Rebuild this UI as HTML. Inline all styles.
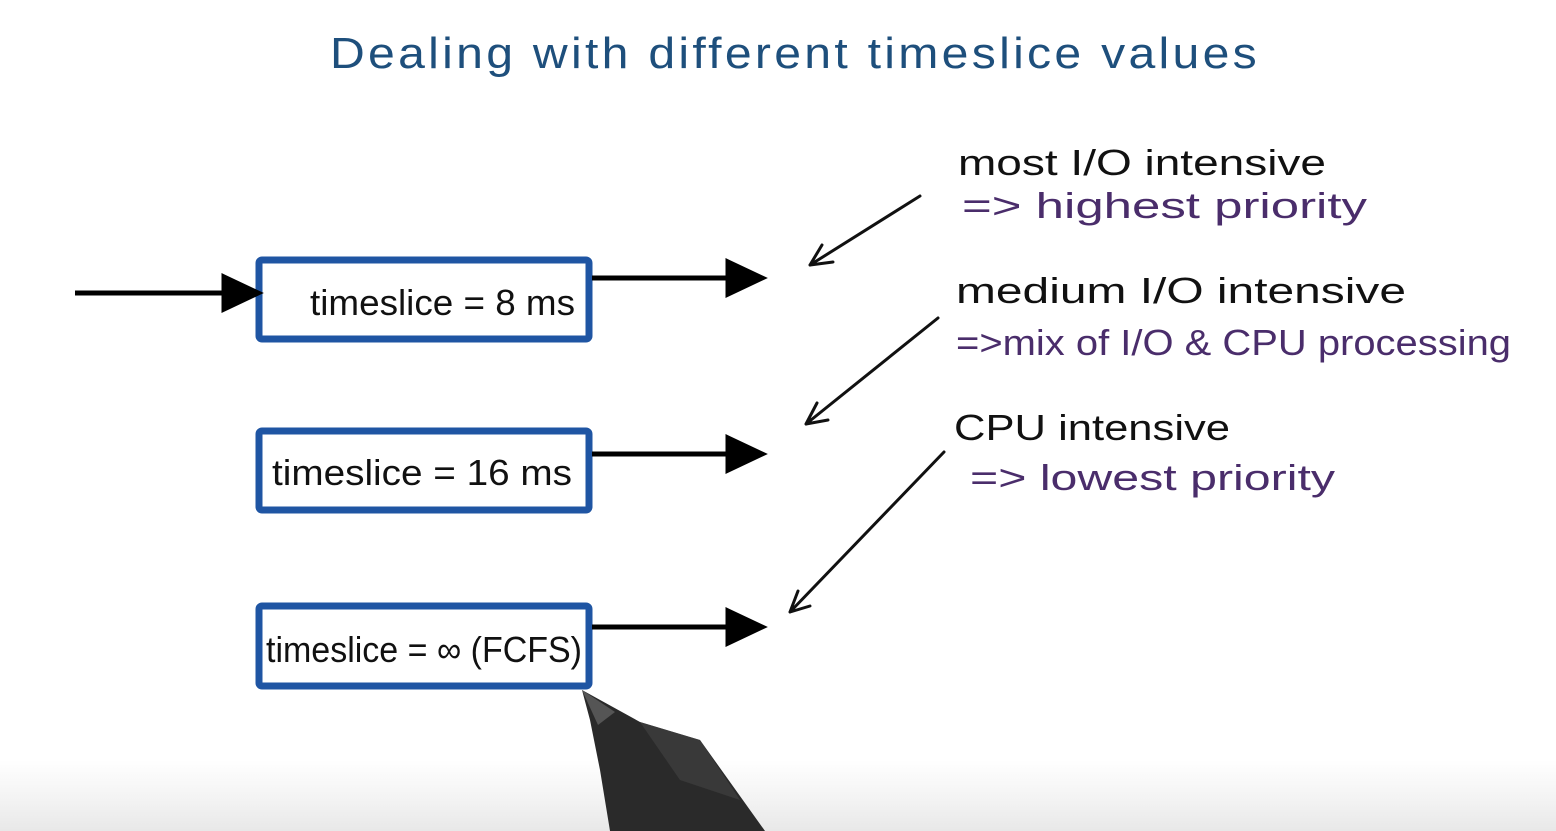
<!DOCTYPE html>
<html><head><meta charset="utf-8"><style>
html,body{margin:0;padding:0;}
body{width:1556px;height:831px;overflow:hidden;background:linear-gradient(#fff 0,#fff 760px,#f3f3f3 800px,#e8e8e8 831px);font-family:"Liberation Sans",sans-serif;}
svg{position:absolute;left:0;top:0}
</style></head><body>
<svg width="1556" height="831" viewBox="0 0 1556 831">
<defs><marker id="ah" markerWidth="10" markerHeight="10" refX="8" refY="5" orient="auto" markerUnits="userSpaceOnUse"></marker></defs>
<text x="330" y="68" font-family="Liberation Sans" font-size="44" fill="#1e4f7c" letter-spacing="3" textLength="930" lengthAdjust="spacingAndGlyphs">Dealing with different timeslice values</text>
<g fill="none" stroke="#1f55a3" stroke-width="7">
<rect x="259" y="260" width="330" height="79" rx="3"/>
<rect x="259" y="431" width="330" height="79" rx="3"/>
<rect x="259" y="606" width="330" height="80" rx="3"/>
</g>
<g font-family="Liberation Sans" font-size="36" fill="#111">
<text x="310" y="315" textLength="265" lengthAdjust="spacingAndGlyphs">timeslice = 8 ms</text>
<text x="272" y="485" textLength="300" lengthAdjust="spacingAndGlyphs">timeslice = 16 ms</text>
<text x="266" y="662" textLength="316" lengthAdjust="spacingAndGlyphs">timeslice = ∞ (FCFS)</text>
</g>
<g stroke="#000" stroke-width="5" fill="#000">
<line x1="75" y1="293" x2="230" y2="293"/><polygon points="224,277 258,293 224,309"/>
<line x1="592" y1="278" x2="735" y2="278"/><polygon points="728,262 762,278 728,294"/>
<line x1="592" y1="454" x2="735" y2="454"/><polygon points="728,438 762,454 728,470"/>
<line x1="592" y1="627" x2="735" y2="627"/><polygon points="728,611 762,627 728,643"/>
</g>
<g stroke="#111" stroke-width="3" fill="none" stroke-linecap="round">
<path d="M920 196 L810 265 M810 265 L833 262 M810 265 L822 245"/>
<path d="M938 318 L806 424 M806 424 L828 420 M806 424 L817 403"/>
<path d="M944 452 L790 612 M790 612 L810 606 M790 612 L798 591"/>
</g>
<g font-family="Liberation Sans" font-size="36">
<text x="958" y="175" fill="#111" textLength="368" lengthAdjust="spacingAndGlyphs">most I/O intensive</text>
<text x="962" y="218" fill="#4a2d6b" textLength="405" lengthAdjust="spacingAndGlyphs">=&gt; highest priority</text>
<text x="956" y="303" fill="#111" textLength="450" lengthAdjust="spacingAndGlyphs">medium I/O intensive</text>
<text x="956" y="355" fill="#4a2d6b" textLength="555" lengthAdjust="spacingAndGlyphs">=&gt;mix of I/O &amp; CPU processing</text>
<text x="954" y="440" fill="#111" textLength="276" lengthAdjust="spacingAndGlyphs">CPU intensive</text>
<text x="970" y="490" fill="#4a2d6b" textLength="365" lengthAdjust="spacingAndGlyphs">=&gt; lowest priority</text>
</g>
<path d="M582 690 L640 722 L700 740 L765 831 L610 831 L600 770 L590 720 Z" fill="#2a2a2a"/>
<path d="M582 690 L615 712 L598 725 Z" fill="#555"/>
<path d="M640 722 L700 740 L740 800 L680 780 Z" fill="#444" opacity="0.6"/>
</svg>
</body></html>
